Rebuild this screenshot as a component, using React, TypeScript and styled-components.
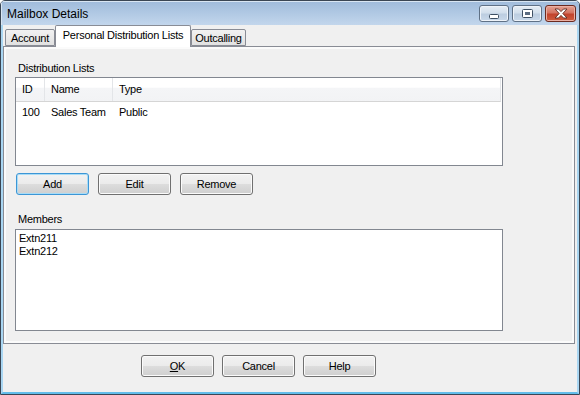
import React from "react";
import styled, { createGlobalStyle } from "styled-components";

const GlobalStyle = createGlobalStyle`
  html, body {
    margin: 0;
    padding: 0;
    background: #ffffff;
    overflow: hidden;
  }
  body {
    font-family: "Liberation Sans", Arial, sans-serif;
    font-size: 11px;
    letter-spacing: -0.25px;
    color: #000000;
  }
`;

const distributionLists = [{ id: 100, name: "Sales Team", type: "Public" }];
const members = ["Extn211", "Extn212"];

const MinGlyph = () => (
  <svg width="10" height="5" viewBox="0 0 10 5">
    <rect x="0.5" y="0.5" width="9" height="4" rx="1" fill="#ffffff" stroke="#3d4f63" />
  </svg>
);

const MaxGlyph = () => (
  <svg width="11" height="9" viewBox="0 0 11 9">
    <rect x="0.5" y="0.5" width="10" height="8" rx="1" fill="#ffffff" stroke="#3d4f63" />
    <rect x="3" y="3" width="5" height="3" fill="#5a6b80" />
  </svg>
);

const CloseGlyph = () => (
  <svg width="14" height="11" viewBox="0 0 14 11">
    <path
      d="M1 1h3.5L7 3.6 9.5 1H13L8.8 5.5 13 10H9.5L7 7.4 4.5 10H1l4.2-4.5z"
      fill="#ffffff"
      stroke="#5a2a22"
      strokeWidth="0.9"
      strokeLinejoin="round"
    />
  </svg>
);

export default function App() {
  return (
    <>
      <GlobalStyle />
      <Window>
        <TitleBar>
          <Title>Mailbox Details</Title>
          <Controls>
            <CaptionButton aria-label="Minimize">
              <GlyphLow>
                <MinGlyph />
              </GlyphLow>
            </CaptionButton>
            <CaptionButton aria-label="Maximize">
              <MaxGlyph />
            </CaptionButton>
            <CaptionButton $close aria-label="Close">
              <CloseGlyph />
            </CaptionButton>
          </Controls>
        </TitleBar>
        <Body>
          <TabStrip>
            <Tab $width={50}>Account</Tab>
            <Tab $width={136} $active>
              Personal Distribution Lists
            </Tab>
            <Tab $width={55}>Outcalling</Tab>
          </TabStrip>
          <Panel>
            <Label>Distribution Lists</Label>
            <ListView>
              <HeaderRow>
                <HeaderCell>ID</HeaderCell>
                <HeaderCell>Name</HeaderCell>
                <HeaderCell $last>Type</HeaderCell>
              </HeaderRow>
              {distributionLists.map((d) => (
                <Row key={d.id}>
                  <Cell>{d.id}</Cell>
                  <Cell>{d.name}</Cell>
                  <Cell>{d.type}</Cell>
                </Row>
              ))}
            </ListView>
            <ButtonRow>
              <Button $default>Add</Button>
              <Button>Edit</Button>
              <Button>Remove</Button>
            </ButtonRow>
            <Label $top={18}>Members</Label>
            <MembersBox>
              {members.map((m) => (
                <Member key={m}>{m}</Member>
              ))}
            </MembersBox>
          </Panel>
          <Footer>
            <Button>
              <u>O</u>K
            </Button>
            <Button>Cancel</Button>
            <Button>Help</Button>
          </Footer>
        </Body>
      </Window>
    </>
  );
}

const Window = styled.div`
  box-sizing: border-box;
  width: 580px;
  height: 395px;
  border: 1px solid #3a4654;
  border-radius: 5px 5px 0 0;
  display: flex;
  flex-direction: column;
  overflow: hidden;
  background: #f0f0f0;
`;

const TitleBar = styled.div`
  height: 24px;
  flex-shrink: 0;
  display: flex;
  align-items: flex-start;
  padding: 0 3px 0 6px;
  background: linear-gradient(#9fbbdb, #c2d6ec);
  box-shadow: inset 1px 1px 0 #d9e6f3;
`;

const Title = styled.div`
  font-size: 12px;
  letter-spacing: 0;
  line-height: 14px;
  margin-top: 6px;
  color: #000000;
`;

const Controls = styled.div`
  margin-left: auto;
  margin-top: 4px;
  display: flex;
  gap: 3px;
`;

const CaptionButton = styled.div<{ $close?: boolean }>`
  box-sizing: border-box;
  width: ${(p) => (p.$close ? 31 : 30)}px;
  height: 17px;
  border: 1px solid ${(p) => (p.$close ? "#6b2a20" : "#5f7186")};
  border-radius: 3px;
  display: flex;
  align-items: center;
  justify-content: center;
  background: ${(p) =>
    p.$close
      ? "linear-gradient(#e3a293 0%, #d47462 45%, #c2432d 55%, #cf5d3f 100%)"
      : "linear-gradient(#e6edf5 0%, #d2dfec 45%, #bccde0 55%, #c9d9ea 100%)"};
  box-shadow: inset 0 0 0 1px ${(p) => (p.$close ? "#eab0a4" : "#eef3f9")};
`;

const GlyphLow = styled.div`
  display: flex;
  margin-top: 5px;
`;

const Body = styled.div`
  flex: 1;
  display: flex;
  flex-direction: column;
  border: 2px solid #a9d6f2;
  border-top: none;
  border-bottom-color: #62bdea;
  padding-right: 2px;
`;

const TabStrip = styled.div`
  height: 21px;
  display: flex;
  align-items: flex-end;
  padding-left: 2px;
  flex-shrink: 0;
`;

const Tab = styled.div<{ $active?: boolean; $width: number }>`
  box-sizing: border-box;
  width: ${(p) => p.$width}px;
  height: ${(p) => (p.$active ? 22 : 17)}px;
  margin-bottom: ${(p) => (p.$active ? -1 : 0)}px;
  position: relative;
  z-index: ${(p) => (p.$active ? 2 : 1)};
  border: 1px solid #898c95;
  border-bottom: ${(p) => (p.$active ? "none" : "1px solid #898c95")};
  border-radius: 2px 2px 0 0;
  background: ${(p) =>
    p.$active ? "#ffffff" : "linear-gradient(#f2f2f2, #e1e1e1)"};
  display: flex;
  justify-content: center;
  padding-top: ${(p) => (p.$active ? 3 : 2)}px;
  line-height: 13px;
  white-space: nowrap;
`;

const Panel = styled.div`
  box-sizing: border-box;
  height: 298px;
  flex-shrink: 0;
  border: 1px solid #898c95;
  box-shadow: inset 0 0 0 2px #fbfbfb;
  background: #f0f0f0;
  padding: 15px 0 0 11px;
  display: flex;
  flex-direction: column;
`;

const Label = styled.div<{ $top?: number }>`
  line-height: 13px;
  margin: ${(p) => p.$top ?? 0}px 0 2px 3px;
`;

const ListView = styled.div`
  box-sizing: border-box;
  width: 488px;
  height: 89px;
  border: 1px solid #828790;
  background: #ffffff;
`;

const HeaderRow = styled.div`
  display: grid;
  grid-template-columns: 29px 68px 1fr;
  height: 23px;
  margin-right: 1px;
  border-bottom: 1px solid #d5d5d5;
  border-right: 1px solid #e3e5e8;
  background: linear-gradient(#ffffff 0%, #ffffff 40%, #f4f5f7 45%, #f2f3f5 100%);
`;

const HeaderCell = styled.div<{ $last?: boolean }>`
  display: flex;
  align-items: center;
  padding-left: 6px;
  line-height: 13px;
  border-right: ${(p) => (p.$last ? "none" : "1px solid #e3e5e8")};
`;

const Row = styled.div`
  display: grid;
  grid-template-columns: 29px 68px 1fr;
  padding-top: 4px;
  line-height: 13px;
`;

const Cell = styled.div`
  padding-left: 6px;
  white-space: nowrap;
`;

const ButtonRow = styled.div`
  display: flex;
  gap: 9px;
  margin: 7px 0 0 1px;
`;

const Button = styled.div<{ $default?: boolean }>`
  box-sizing: border-box;
  width: 73px;
  height: 22px;
  border: 1px solid ${(p) => (p.$default ? "#3c96d6" : "#707070")};
  border-radius: 3px;
  display: flex;
  align-items: center;
  justify-content: center;
  line-height: 13px;
  background: linear-gradient(#f2f2f2 0%, #ebebeb 50%, #dddddd 50%, #cfcfcf 100%);
  box-shadow: inset 0 0 0 1px ${(p) => (p.$default ? "#a9dcf6" : "#fbfbfb")};
  u {
    text-decoration: underline;
  }
`;

const MembersBox = styled.div`
  box-sizing: border-box;
  width: 488px;
  height: 102px;
  margin-top: 1px;
  border: 1px solid #828790;
  background: #ffffff;
  padding: 2px 0 0 3px;
`;

const Member = styled.div`
  line-height: 13px;
`;

const Footer = styled.div`
  display: flex;
  gap: 8px;
  padding: 11px 0 0 138px;
`;
